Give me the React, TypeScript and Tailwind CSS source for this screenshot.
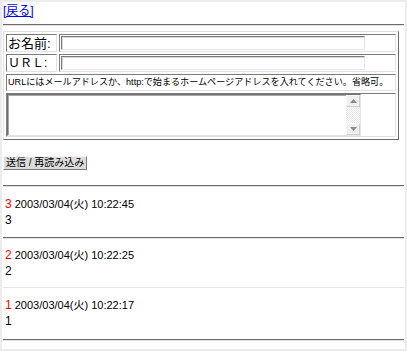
import React from 'react';

const entries = [
  { no: 3, date: '2003/03/04(火) 10:22:45', body: '3', pad: 'pt-[9px] pb-[9px]' },
  { no: 2, date: '2003/03/04(火) 10:22:25', body: '2', pad: 'pt-[8px] pb-[8px]' },
  { no: 1, date: '2003/03/04(火) 10:22:17', body: '1', pad: 'pt-[9px] pb-[10px]' },
];

const Hr = () => (
  <div className="h-[2px] border-t border-t-[#6b6b6b] border-b border-b-[#e4e4e4]" />
);

const cell =
  'border border-t-[#7c7c7c] border-l-[#7c7c7c] border-b-[#e2e2e2] border-r-[#e2e2e2]';

const inputCls =
  'block w-[304px] h-[14px] bg-white border border-t-[#7a7a7a] border-l-[#7a7a7a] border-b-[#e6e6e6] border-r-[#e6e6e6] shadow-[inset_1px_1px_0_#d6d6d6] outline-none text-[11px] px-[2px]';

const App: React.FC = () => {
  return (
    <div className="w-[407px] h-[351px] bg-white border-2 border-[#ececec] px-px text-black overflow-hidden font-['Liberation_Sans','Noto_Sans_CJK_JP',sans-serif]">
      <a href="#" className="block mt-px text-[12px] leading-[16px] text-[#0000ee] underline w-max">
        [戻る]
      </a>

      <div className="mt-[5px]">
        <Hr />
      </div>

      {/* form table */}
      <div className="mt-[5px] w-[396px] border border-t-[#e0e0e0] border-l-[#e0e0e0] border-b-[#6a6a6a] border-r-[#6a6a6a] p-[2px] flex flex-col gap-[2px]">
        <div className="flex gap-[2px]">
          <div className={`${cell} w-[51px] h-[18px] flex items-center pl-[1px] text-[13px] leading-none`}>
            お名前:
          </div>
          <div className={`${cell} flex-1 h-[18px] pt-[1px] pl-[1px]`}>
            <input type="text" className={inputCls} />
          </div>
        </div>
        <div className="flex gap-[2px]">
          <div className={`${cell} w-[51px] h-[18px] flex items-center pl-[1px] text-[12px] leading-none`}>
            ＵＲＬ:
          </div>
          <div className={`${cell} flex-1 h-[18px] pt-[1px] pl-[1px]`}>
            <input type="text" className={inputCls} />
          </div>
        </div>
        <div className={`${cell} h-[17px] flex items-center pl-[1px] text-[9.1px] leading-none whitespace-nowrap`}>
          URLにはメールアドレスか、http:で始まるホームページアドレスを入れてください。省略可。
        </div>
        <div className={`${cell} h-[44px]`}>
          <div className="flex w-[354px] h-[42px] border border-t-[#6f6f6f] border-l-[#6f6f6f] border-b-[#e4e4e4] border-r-[#e4e4e4] shadow-[inset_1px_1px_0_#a8a8a8]">
            <textarea className="flex-1 resize-none outline-none bg-transparent overflow-hidden text-[12px]" />
            <div className="w-[14px] flex flex-col bg-[repeating-conic-gradient(#e6e6e6_0_25%,#ffffff_0_50%)] bg-[length:2px_2px]">
              <div className="h-[12px] bg-[#efefef] border border-t-[#fafafa] border-l-[#fafafa] border-b-[#d0d0d0] border-r-[#d0d0d0] flex items-center justify-center">
                <svg width="7" height="4" viewBox="0 0 7 4">
                  <path d="M3.5 0 L7 4 L0 4 Z" fill="#8a8a8a" />
                </svg>
              </div>
              <div className="flex-1" />
              <div className="h-[12px] bg-[#efefef] border border-t-[#fafafa] border-l-[#fafafa] border-b-[#d0d0d0] border-r-[#d0d0d0] flex items-center justify-center">
                <svg width="7" height="4" viewBox="0 0 7 4">
                  <path d="M0 0 L7 0 L3.5 4 Z" fill="#8a8a8a" />
                </svg>
              </div>
            </div>
          </div>
        </div>
      </div>

      <button
        type="button"
        className="mt-[16px] block h-[14px] px-[2px] bg-[#dcdcdc] border border-t-[#f6f6f6] border-l-[#f6f6f6] border-b-[#7a7a7a] border-r-[#7a7a7a] text-[10px] leading-none whitespace-nowrap"
      >
        送信 / 再読み込み
      </button>

      <div className="mt-[15px]">
        <Hr />
      </div>

      {entries.map((e, i) => (
        <div key={e.no}>
          <div className={`${e.pad} leading-[16px]`}>
            <div className="whitespace-nowrap pl-[2px] text-[11px]">
              <span className="text-[#ff0000] text-[12px]">{e.no}</span> {e.date}
            </div>
            <div className="pl-[2px] text-[12px]">{e.body}</div>
          </div>
          {i === 1 ? <div className="h-px bg-[#e6e6e6]" /> : <Hr />}
        </div>
      ))}
    </div>
  );
};

export default App;
